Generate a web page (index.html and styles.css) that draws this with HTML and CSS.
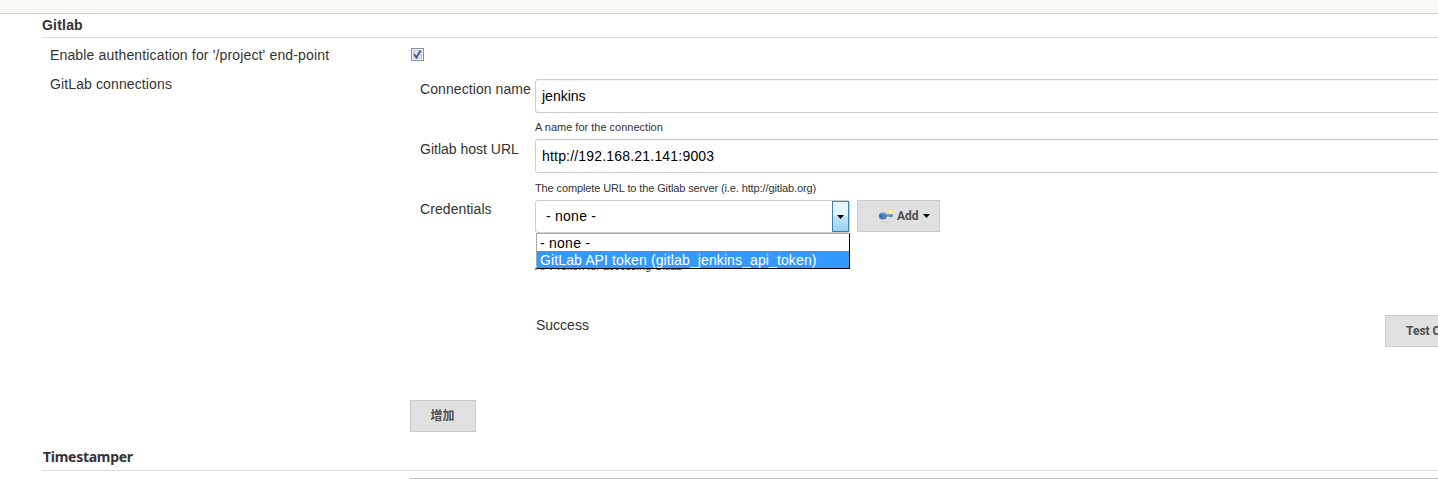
FILE: index.html
```html
<!DOCTYPE html>
<html lang="en">
<head>
<meta charset="utf-8">
<title>Configure System</title>
<link rel="stylesheet" href="styles.css">
</head>
<body>
<div class="topbar"></div>
<main class="config">
  <h2 class="section-title"><span class="t-gitlab">Gitlab</span></h2>
  <div class="row auth-row">
    <label class="row-label"><span class="t-enable">Enable authentication for '/project' end-point</span></label>
    <svg class="check" width="13" height="13" viewBox="0 0 13 13">
      <rect x=".5" y=".5" width="12" height="12" fill="#f4f4f4" stroke="#8e8f8f"/>
      <rect x="2.5" y="2.5" width="8" height="8" fill="#dfe3e9" stroke="#c3c9d1"/>
      <path d="M3.200 6.200 5.500 9.500 9.500 2.500" fill="none" stroke="#42599c" stroke-width="1.900"/>
    </svg>
  </div>
  <div class="row connections">
    <div class="row-label"><span class="t-conn">GitLab connections</span></div>
    <div class="fields">
      <div class="field field-name">
        <label class="field-label"><span class="t-name">Connection name</span></label>
        <div class="control">
          <div class="textbox"><span class="t-jenkins">jenkins</span></div>
          <div class="help"><span class="t-help1">A name for the connection</span></div>
        </div>
      </div>
      <div class="field field-url">
        <label class="field-label"><span class="t-host">Gitlab host URL</span></label>
        <div class="control">
          <div class="textbox"><span class="t-url">http://192.168.21.141:9003</span></div>
          <div class="help help-url"><span class="t-help2">The complete URL to the Gitlab server (i.e. http://gitlab.org)</span></div>
        </div>
      </div>
      <div class="field field-cred">
        <label class="field-label"><span class="t-cred">Credentials</span></label>
        <div class="control">
          <div class="cred-line">
            <div class="select">
              <span class="t-none">- none -</span>
              <span class="arrow"><svg width="7" height="4" viewBox="0 0 7 4"><path d="M0 0h7L3.500 4z" fill="#000"/></svg></span>
              <div class="options">
                <div class="option"><span class="t-none">- none -</span></div>
                <div class="option selected"><span class="t-token">GitLab API token (gitlab_jenkins_api_token)</span></div>
              </div>
            </div>
            <div class="button add">
              <svg width="16" height="16" viewBox="0 0 16 16">
                <ellipse cx="7.500" cy="14" rx="6" ry=".8" fill="#cdcdcd"/>
                <circle cx="12.500" cy="3.500" r="2.500" fill="#f5ec6a"/>
                <circle cx="12.500" cy="3.500" r="1" fill="#fffdc0"/>
                <ellipse cx="4.800" cy="8" rx="4" ry="3.500" fill="#4a7dbd"/>
                <path d="M8 6.300h7v2l-1.500 1-1-.9-1 .9-1-.9H8z" fill="#4a7dbd"/>
                <path d="M3 5.800q3-1 5 1.100h6.500" fill="none" stroke="#7fa8d6"/>
                <circle cx="3" cy="8" r="1" fill="#2f5b99"/>
              </svg>
              <span class="t-add">Add</span>
              <svg class="caret" width="7" height="4" viewBox="0 0 7 4"><path d="M0 0h7L3.500 4z" fill="#000"/></svg>
            </div>
          </div>
          <div class="help help-cred"><span class="t-help3">API Token for accessing Gitlab</span></div>
        </div>
      </div>
      <div class="test-line">
        <span class="t-success">Success</span>
        <div class="button test"><span class="t-test">Test Connection</span></div>
      </div>
      <div class="button more">增加</div>
    </div>
  </div>
  <h2 class="section-title stamp"><span class="t-stamp">Timestamper</span></h2>
  <div class="next-field"></div>
</main>
</body>
</html>
```
FILE: styles.css
```css
* { box-sizing: border-box; }
html, body { height: 100%; }
body {
  margin: 0;
  overflow: hidden;
  background: #fff;
  color: #333;
  font: 14px/18px "Liberation Sans", "Noto Sans CJK SC", sans-serif;
  white-space: nowrap;
}
svg { display: block; flex: none; }
.topbar { height: 14px; background: #f6faf2; border-bottom: 1px solid #d3d7cf; }
.config { height: 465px; overflow: hidden; padding-left: 42px; }
.section-title {
  margin: 0;
  height: 24px;
  padding-top: 2px;
  border-bottom: 1px solid #ddd;
  font-size: 14px;
  line-height: 18px;
}
.t-gitlab { letter-spacing: .2px; }
.t-enable { letter-spacing: .15px; }
.t-conn { letter-spacing: .12px; }
.t-name, .t-cred { letter-spacing: .08px; }
.t-url { letter-spacing: .19px; }
.t-none { letter-spacing: .25px; }
.t-token { letter-spacing: .115px; }
.t-help2 { letter-spacing: -.115px; }
.t-help3 { letter-spacing: -.08px; }
.t-stamp { letter-spacing: -.28px; margin-left: 1px; }
.row { display: flex; }
.row-label { width: 368px; padding-left: 8px; flex: none; }
.auth-row { height: 29px; padding-top: 8px; }
.check { margin: 2px 0 0 1px; }
.connections { height: 381px; padding-top: 8px; }
.fields { padding-top: 4px; width: 1100px; flex: none; }
.field { display: flex; padding-left: 10px; }
.field-name { height: 60px; }
.field-url { height: 61px; }
.field-cred { height: 115px; }
.field-label { width: 115px; flex: none; padding-top: 1px; }
.field-cred .field-label { padding-top: 0; }
.control { flex: 1; }
.textbox {
  height: 34px;
  border: 1px solid #ccc;
  border-radius: 3px;
  padding: 7px 6px;
  color: #000;
  box-shadow: inset 0 1px 1px #f2f2f2;
}
.help { margin-top: 7px; font-size: 11px; line-height: 14px; }
.help-url { margin-top: 8px; }
.help-cred { margin-top: 26px; }
.cred-line { display: flex; gap: 7px; }
.select {
  position: relative;
  width: 315px;
  height: 33px;
  border: 1px solid #ccc;
  border-radius: 3px;
  padding: 6px 10px;
  color: #000;
}
.arrow {
  position: absolute;
  right: 0;
  top: 0;
  width: 17px;
  height: 31px;
  border: 1px solid #3c7fb1;
  background: linear-gradient(#e5f5fd 0 45%, #c4e5f6 50%, #98d1ef);
  display: flex;
  align-items: center;
  justify-content: center;
}
.options {
  position: absolute;
  z-index: 2;
  left: 0;
  top: 32px;
  width: 314px;
  height: 36px;
  border: 1px solid #000;
  border-top-color: #aaa;
  border-left-color: #aaa;
  background: #fff;
}
.option { height: 17px; line-height: 18px; padding-left: 3px; }
.selected { background: #39f; color: #fff; }
.button {
  height: 32px;
  display: flex;
  align-items: center;
  background: #e0e0e0;
  border: 1px solid #ccc;
  color: #4d4d4d;
  font: bold 12px/16px Roboto, "Noto Sans CJK SC", sans-serif;
}
.add { width: 83px; padding-left: 20px; }
.add .t-add { width: 22px; margin-left: 3px; }
.caret { margin-left: 4px; }
.test-line { display: flex; justify-content: space-between; height: 85px; padding-left: 126px; }
.t-success { margin-top: 1px; }
.test { width: 125px; padding-left: 20px; }
.more { width: 66px; justify-content: center; padding-right: 1px; }
.stamp { height: 23px; font-family: "Noto Sans", sans-serif; padding-top: 0; }
.next-field { margin: 7px 0 0 366px; width: 1100px; height: 34px; border: 1px solid #bbb; border-radius: 3px; }
```
